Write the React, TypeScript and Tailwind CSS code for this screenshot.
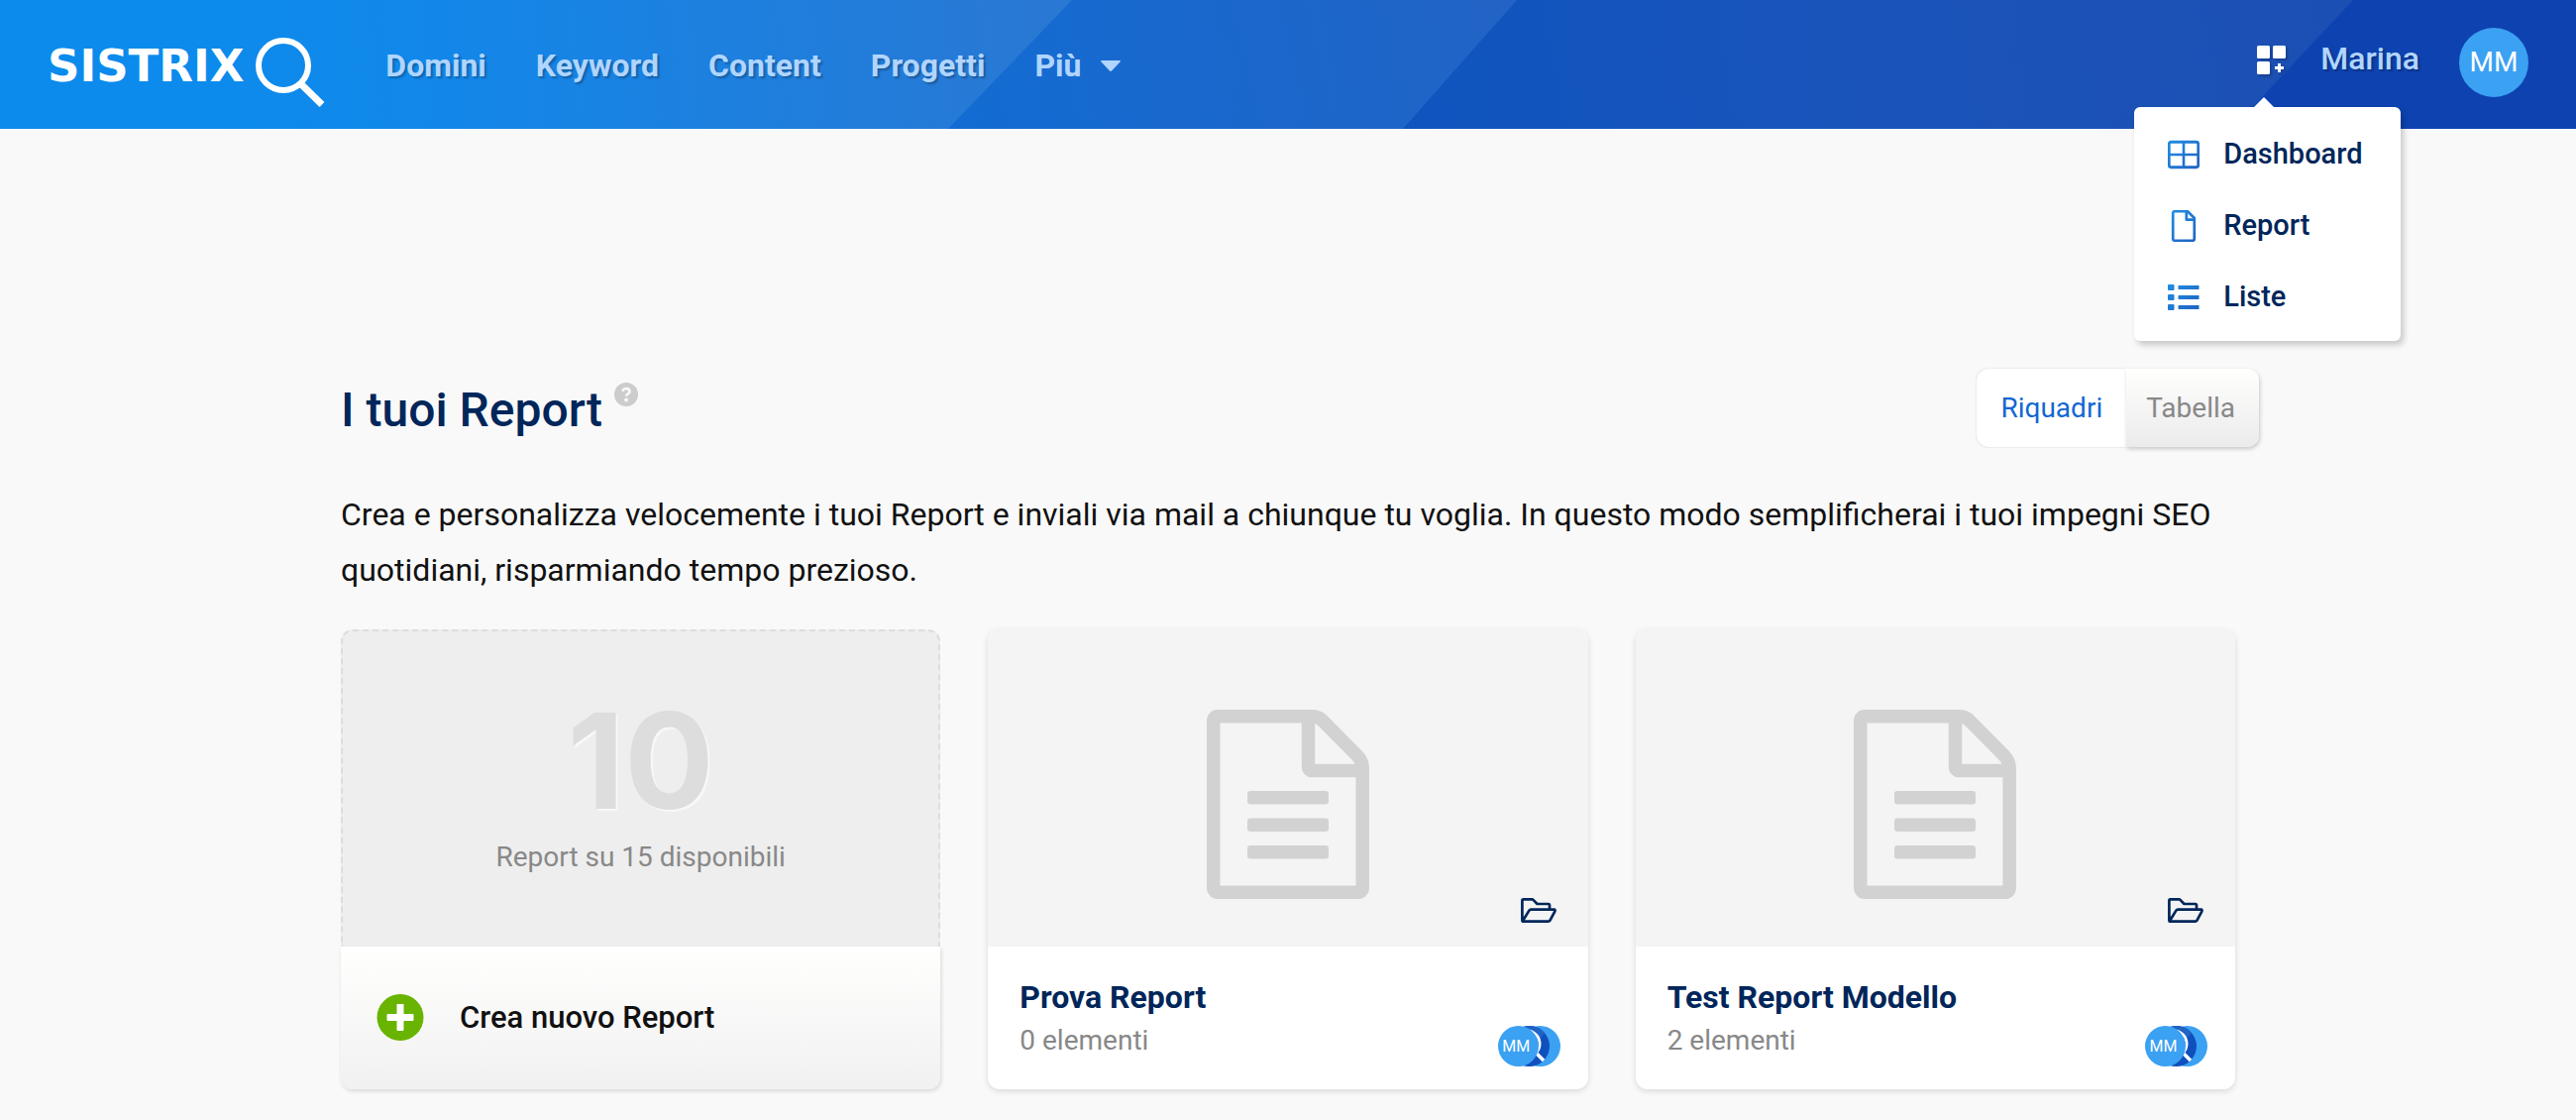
import { useId, useState } from "react";

type View = "tiles" | "table";

interface Report {
  name: string;
  items: string;
}

const NAV_ITEMS = ["Domini", "Keyword", "Content", "Progetti"];

const REPORTS: Report[] = [
  { name: "Prova Report", items: "0 elementi" },
  { name: "Test Report Modello", items: "2 elementi" },
];

function HeaderBackground() {
  return (
    <svg
      className="absolute inset-0 h-full w-full"
      viewBox="0 0 2600 130"
      preserveAspectRatio="none"
      aria-hidden="true"
    >
      <defs>
        <linearGradient id="band-1" gradientUnits="userSpaceOnUse" x1="200" y1="100" x2="1060" y2="0">
          <stop offset="0" stopColor="#0c8bec" />
          <stop offset="0.25" stopColor="#1188ea" />
          <stop offset="0.6" stopColor="#1d80df" />
          <stop offset="1" stopColor="#2978d3" />
        </linearGradient>
        <linearGradient id="band-2" gradientUnits="userSpaceOnUse" x1="960" y1="130" x2="1520" y2="0">
          <stop offset="0" stopColor="#126cd3" />
          <stop offset="1" stopColor="#2263c5" />
        </linearGradient>
        <linearGradient id="band-3" gradientUnits="userSpaceOnUse" x1="1420" y1="130" x2="2370" y2="0">
          <stop offset="0" stopColor="#0f54bf" />
          <stop offset="0.5" stopColor="#1a54ba" />
          <stop offset="1" stopColor="#1d4fb3" />
        </linearGradient>
      </defs>
      <rect width="2600" height="130" fill="#0e42b0" />
      <path d="M1400 0H2375L2253 130H1400Z" fill="url(#band-3)" />
      <path d="M900 0H1531L1416 130H900Z" fill="url(#band-2)" />
      <path d="M0 0H1082L957 130H0Z" fill="url(#band-1)" />
    </svg>
  );
}

function Logo() {
  return (
    <a href="#" className="flex items-center gap-3 text-white">
      <span className="font-['DejaVu_Sans',sans-serif] text-[45px] leading-none font-bold">SISTRIX</span>
      <svg width="70" height="84" viewBox="0 -14 70 84" fill="none" stroke="currentColor" aria-hidden="true">
        <circle cx="28" cy="28" r="25" strokeWidth="6" />
        <path d="M45 46L67 67.500" strokeWidth="7" />
      </svg>
    </a>
  );
}

function AppsIcon() {
  return (
    <svg className="drop-shadow-[2px_2px_1px_#0003]" width="30" height="30" viewBox="0 0 30 30" fill="currentColor" aria-hidden="true">
      <rect x="0" y="0" width="13" height="13" rx="1.5" />
      <rect x="16" y="0" width="13" height="13" rx="1.5" />
      <rect x="0" y="16" width="13" height="13" rx="1.5" />
      <path d="M21 18h3v3h3v3h-3v3h-3v-3h-3v-3h3z" />
    </svg>
  );
}

function DashboardIcon({ paint }: { paint: string }) {
  return (
    <svg width="32" height="32" viewBox="0 0 32 32" fill="none" stroke={paint} aria-hidden="true">
      <rect x="1.25" y="3.25" width="29.5" height="25.5" rx="2" strokeWidth="2.8" />
      <path d="M16 3.01L16.01 29M1 16L31 16.01" strokeWidth="2.6" />
    </svg>
  );
}

function ReportIcon({ paint }: { paint: string }) {
  return (
    <svg width="32" height="32" viewBox="0 0 32 32" fill="none" stroke={paint} strokeWidth="2.700" strokeLinejoin="round" aria-hidden="true">
      <path d="M20 1.25H7a1.8 1.8 0 0 0-1.8 1.8v25.9a1.8 1.8 0 0 0 1.8 1.8h18a1.8 1.8 0 0 0 1.8-1.8V8z" />
      <path d="M18.8 1.5V9.7H26.5" />
    </svg>
  );
}

function ListIcon({ paint }: { paint: string }) {
  return (
    <svg width="32" height="32" viewBox="0 0 32 32" fill={paint} aria-hidden="true">
      <path d="M1 3h4.500a1 1 0 0 1 1 1v4a1 1 0 0 1-1 1H1a1 1 0 0 1-1-1V4a1 1 0 0 1 1-1zM1 13h4.500a1 1 0 0 1 1 1v4a1 1 0 0 1-1 1H1a1 1 0 0 1-1-1v-4a1 1 0 0 1 1-1zM1 23h4.500a1 1 0 0 1 1 1v4a1 1 0 0 1-1 1H1a1 1 0 0 1-1-1v-4a1 1 0 0 1 1-1zM11 4h20.500v4H11a.5.5 0 0 1-.5-.5v-3A.5.5 0 0 1 11 4zM11 14h20.500v4H11a.5.5 0 0 1-.5-.5v-3a.5.5 0 0 1 .5-.5zM11 24h20.500v4H11a.5.5 0 0 1-.5-.5v-3a.5.5 0 0 1 .5-.5z" />
    </svg>
  );
}

const MENU_ITEMS = [
  { label: "Dashboard", Icon: DashboardIcon },
  { label: "Report", Icon: ReportIcon },
  { label: "Liste", Icon: ListIcon },
];

function AppsMenu() {
  const [open, setOpen] = useState(true);
  const gradientId = useId();
  const paint = `url(#${gradientId})`;

  return (
    <div className="relative flex">
      <button
        type="button"
        className="text-white"
        aria-label="Dashboard, Report e Liste"
        aria-expanded={open}
        onClick={() => setOpen(!open)}
      >
        <AppsIcon />
      </button>
      {open && (
        <div className="absolute top-[62px] -right-[115px] z-10 w-[269px] rounded-md bg-white px-[34px] pt-7 pb-6 shadow-[3px_4px_6px_#0003]">
          <svg className="absolute -top-[10px] left-[120px]" width="22" height="11" viewBox="0 0 22 11" fill="#fff" aria-hidden="true">
            <path d="M0 11L11 0L22 11z" />
          </svg>
          <svg className="absolute h-0 w-0" aria-hidden="true">
            <linearGradient id={gradientId} gradientUnits="userSpaceOnUse" x1="0" y1="0" x2="32" y2="32">
              <stop offset="0" stopColor="#1f8fe5" />
              <stop offset="1" stopColor="#2160c0" />
            </linearGradient>
          </svg>
          <ul className="flex flex-col gap-8">
            {MENU_ITEMS.map(({ label, Icon }) => (
              <li key={label}>
                <a href="#" className="flex h-10 items-center gap-6 text-[29px] font-medium text-[#00265a]">
                  <Icon paint={paint} />
                  {label}
                </a>
              </li>
            ))}
          </ul>
        </div>
      )}
    </div>
  );
}

function Header() {
  return (
    <header className="relative flex h-[130px] items-center justify-between bg-[#0e42b0] px-12">
      <HeaderBackground />
      <div className="relative flex items-center gap-[61px] pt-[2px]">
        <Logo />
        <nav className="flex items-center gap-[50px] text-[32px] leading-10 font-bold text-[#b0d5ff] text-shadow-[2px_2px_2px_#0004]">
          {NAV_ITEMS.map((item) => (
            <a key={item} href="#">
              {item}
            </a>
          ))}
          <button type="button" className="flex items-center gap-5">
            Più
            <svg width="20" height="11" viewBox="0 0 20 11" fill="currentColor" aria-hidden="true">
              <path d="M1 0h18q1.500.4.5 1.500l-8.500 9q-1 .9-2 0l-8.500-9Q-.5.4 1 0z" />
            </svg>
          </button>
        </nav>
      </div>
      <div className="relative flex items-center pb-2">
        <AppsMenu />
        <a href="#" className="ml-[34px] pb-1 text-[32px] leading-10 font-medium text-[#b0d5ff] text-shadow-[2px_2px_2px_#0004]">
          Marina
        </a>
        <span className="mt-1 ml-10 flex size-[70px] items-center justify-center rounded-full bg-[#3ba1f2] text-[28px] text-white">
          MM
        </span>
      </div>
    </header>
  );
}

interface ViewSwitchProps {
  view: View;
  onChange: (view: View) => void;
}

function ViewSwitch({ view, onChange }: ViewSwitchProps) {
  const active = "bg-white text-[#1467d2] shadow-[0_0_2px_#0003]";
  const idle = "bg-linear-to-b from-[#fffffe] to-[#ebebeb] text-[#888] shadow-[1px_2px_4px_#0003]";

  return (
    <div className="-mr-6 flex h-[79px] text-[28px]">
      <button
        type="button"
        aria-pressed={view === "tiles"}
        className={`rounded-l-xl px-6 ${view === "tiles" ? active : idle}`}
        onClick={() => onChange("tiles")}
      >
        Riquadri
      </button>
      <button
        type="button"
        aria-pressed={view === "table"}
        className={`rounded-r-xl pr-6 pl-5 ${view === "table" ? active : idle}`}
        onClick={() => onChange("table")}
      >
        Tabella
      </button>
    </div>
  );
}

function NewReportCard() {
  return (
    <article className="flex flex-col">
      <div className="flex h-80 flex-col items-center rounded-t-xl border-2 border-b-0 border-dashed border-[#ddd] bg-[#eee] pt-16">
        <strong className="font-[Inter,sans-serif] text-[134px] leading-[132px] font-bold text-[#ddd] text-shadow-[2px_2px_1px_#fff9]">
          10
        </strong>
        <span className="mt-4 text-[28px] leading-8 text-[#888]">Report su 15 disponibili</span>
      </div>
      <button
        type="button"
        className="flex h-36 items-center gap-9 rounded-b-xl bg-linear-to-b from-[#fffffe] to-[#f1f1f1] px-9 text-[31px] font-medium text-[#111] shadow-[1px_2px_4px_#0002]"
      >
        <svg width="48" height="48" viewBox="0 0 48 48" aria-hidden="true">
          <circle cx="24" cy="23.500" r="23.500" fill="#68b400" />
          <path d="M20.500 10h7v10h9a1 1 0 0 1 1 1v5a1 1 0 0 1-1 1h-9v9a1 1 0 0 1-1 1h-5a1 1 0 0 1-1-1v-9h-9a1 1 0 0 1-1-1v-5a1 1 0 0 1 1-1h9z" fill="#fff" />
        </svg>
        Crea nuovo Report
      </button>
    </article>
  );
}

function DocumentIcon() {
  return (
    <svg width="164" height="191" viewBox="0 0 164 191" fill="none" stroke="#d2d2d2" strokeWidth="13.500" aria-hidden="true">
      <path d="M6.750 11a4.250 4.250 0 0 1 4.250-4.250H107q6 0 10 4.500L151.500 46q5.700 6 5.700 13V180a4.250 4.250 0 0 1-4.250 4.250H11A4.250 4.250 0 0 1 6.750 180z" />
      <path d="M102.500 7V58a3.500 3.500 0 0 0 3.500 3.500H157" />
      <g fill="#d2d2d2" stroke="none">
        <rect x="41" y="82" width="82" height="13.500" rx="3" />
        <rect x="41" y="109.500" width="82" height="13.500" rx="3" />
        <rect x="41" y="137" width="82" height="13.500" rx="3" />
      </g>
    </svg>
  );
}

function FolderIcon() {
  return (
    <svg width="36" height="25" viewBox="0 0 36 25" fill="none" stroke="#00265a" strokeWidth="2.700" strokeLinejoin="round" aria-hidden="true">
      <path d="M29 11V7.200Q29 6 27.800 6H16.500L12.500 1.900Q12 1.400 11.300 1.400H2.600Q1.400 1.400 1.400 2.600V22.400Q1.400 23.600 2.600 23.600H27.800Q28.800 23.600 29.300 22.800L34.300 13.600Q35 11.600 33.600 11.600H10.200Q9 11.600 8.400 12.600L2 23" />
    </svg>
  );
}

function Members() {
  return (
    <div className="flex">
      <span className="z-20 flex size-[41px] items-center justify-center rounded-full bg-[#3ba1f2] pr-1 text-base text-white">MM</span>
      <svg className="z-10 -ml-[30px]" width="41" height="41" viewBox="0 0 41 41" fill="none" aria-hidden="true">
        <circle cx="20.500" cy="20.500" r="20.500" fill="#0f50bd" />
        <path d="M9 3.500A20.500 20.500 0 0 1 36 7L30 15Z" fill="#2163c6" />
        <circle cx="18" cy="18" r="13" stroke="#fff" strokeWidth="3" />
        <path d="M27 27L35 35" stroke="#fff" strokeWidth="3.500" />
      </svg>
      <span className="-ml-[30px] size-[41px] rounded-full bg-[#3ba1f2]" />
    </div>
  );
}

function ReportCard({ report }: { report: Report }) {
  return (
    <article className="overflow-hidden rounded-xl bg-white shadow-[0_2px_6px_#0002]">
      <div className="grid h-80 grid-cols-[1fr_auto_1fr] bg-[#f4f4f4] px-8">
        <span className="col-start-2 self-center pt-8">
          <DocumentIcon />
        </span>
        <button type="button" className="self-end justify-self-end pb-6" aria-label="Sposta nella cartella">
          <FolderIcon />
        </button>
      </div>
      <div className="flex h-36 items-end justify-between pt-6 pr-7 pb-[23px] pl-8">
        <div className="flex flex-col gap-1 pb-[6px]">
          <h2 className="text-[32px] leading-10 font-bold text-[#00265a]">{report.name}</h2>
          <p className="text-[28px] leading-10 text-[#888]">{report.items}</p>
        </div>
        <Members />
      </div>
    </article>
  );
}

export default function App() {
  const [view, setView] = useState<View>("tiles");

  return (
    <div className="min-h-screen bg-[#f9f9f9] font-[Roboto,sans-serif]">
      <Header />
      <main className="mx-auto max-w-[1912px] pt-[242px] pb-[31px]">
        <div className="flex items-center justify-between">
          <div className="flex items-start gap-3 pt-1">
            <h1 className="text-[48px] leading-[64px] font-medium text-[#00265a]">I tuoi Report</h1>
            <button type="button" className="mt-1" aria-label="Aiuto">
              <svg width="24" height="24" viewBox="0 0 24 24" aria-hidden="true">
                <circle cx="12" cy="12" r="12" fill="#ccc" />
                <path d="M8.200 8.700Q9.200 6 12 6q3.500 0 3.500 2.900 0 1.500-1.700 2.500-1.600 1-1.600 2.300" fill="none" stroke="#f9f9f9" strokeWidth="2.600" />
                <circle cx="12.100" cy="17.500" r="1.900" fill="#f9f9f9" />
              </svg>
            </button>
          </div>
          <ViewSwitch view={view} onChange={setView} />
        </div>
        <p className="mt-10 text-[32px] leading-[56px] text-[#111]">
          Crea e personalizza velocemente i tuoi Report e inviali via mail a chiunque tu voglia. In questo modo
          semplificherai i tuoi impegni SEO quotidiani, risparmiando tempo prezioso.
        </p>
        <div className="mt-8 grid grid-cols-3 gap-12">
          <NewReportCard />
          {REPORTS.map((report) => (
            <ReportCard key={report.name} report={report} />
          ))}
        </div>
      </main>
    </div>
  );
}
